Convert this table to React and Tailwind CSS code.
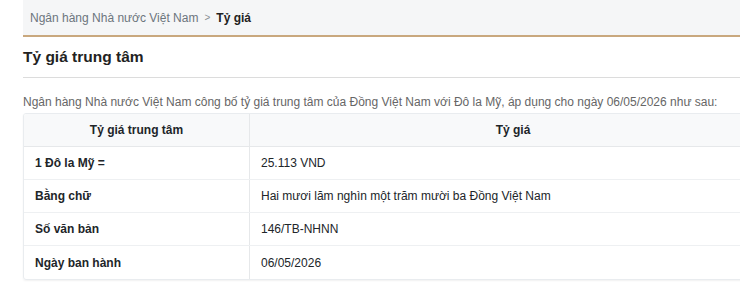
export default function App() {
  const rows = [
    ["1 Đô la Mỹ =", "25.113 VND"],
    ["Bằng chữ", "Hai mươi lăm nghìn một trăm mười ba Đồng Việt Nam"],
    ["Số văn bản", "146/TB-NHNN"],
    ["Ngày ban hành", "06/05/2026"],
  ];
  return (
    <div className="w-[740px] h-[289px] overflow-hidden bg-white" style={{ fontFamily: '"Liberation Sans", Arial, sans-serif' }}>
      <div className="ml-[23px] w-[754px]">
        <div className="h-[37px] bg-[#f5f6f7] border-b-2 border-[#c9a87e] flex items-center pl-[7px] text-[12px]">
          <span className="text-[#6c757d]">Ngân hàng Nhà nước Việt Nam</span>
          <span className="text-[#8a8f94] text-[10px] mx-[6px]">&gt;</span>
          <span className="font-bold text-[#222]">Tỷ giá</span>
        </div>
        <div className="h-[41px] flex items-center border-b border-[#dcdcdc] text-[15.5px] font-bold text-[#222]">
          Tỷ giá trung tâm
        </div>
        <p className="mt-[17px] text-[12px] leading-[14px] text-[#666] whitespace-nowrap">
          Ngân hàng Nhà nước Việt Nam công bố tỷ giá trung tâm của Đồng Việt Nam với Đô la Mỹ, áp dụng cho ngày 06/05/2026 như sau:
        </p>
        <div className="mt-[4px] rounded-[3px] border border-[#e9ecef] shadow-[0_1px_2px_rgba(0,0,0,0.06)] overflow-hidden text-[12px] text-[#212529]">
          <div className="flex h-[33px] bg-[#f8f9fa] border-b border-[#e6e8ea] font-bold">
            <div className="w-[226px] border-r border-[#e6e8ea] flex items-center justify-center">Tỷ giá trung tâm</div>
            <div className="flex-1 flex items-center justify-center">Tỷ giá</div>
          </div>
          {rows.map((r, i) => (
            <div key={i} className={"flex h-[33px] " + (i < rows.length - 1 ? "border-b border-[#eef0f2]" : "")}>
              <div className="w-[226px] border-r border-[#e6e8ea] flex items-center pl-[11px] font-bold">{r[0]}</div>
              <div className="flex-1 flex items-center pl-[11px]">{r[1]}</div>
            </div>
          ))}
        </div>
      </div>
    </div>
  );
}
